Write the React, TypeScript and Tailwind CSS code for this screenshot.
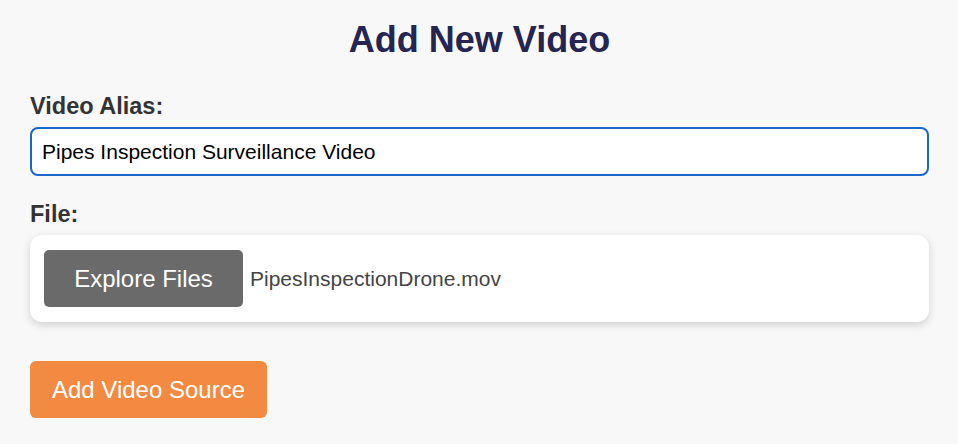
import React from "react";

export default function App() {
  return (
    <div
      className="min-h-[444px] w-full bg-[#f8f8f8] pl-[30px] pr-[29px] pt-[20px]"
      style={{ fontFamily: '"Liberation Sans", Arial, Helvetica, sans-serif' }}
    >
      <h1 className="text-center text-[36px] leading-[40px] font-bold text-[#262450]">
        Add New Video
      </h1>
      <label className="mt-[32px] block text-[23.5px] leading-[28px] font-bold text-[#333333]">
        Video Alias:
      </label>
      <div className="mt-[7px] flex h-[49px] items-center rounded-[8px] border-2 border-[#1b65cb] bg-white pl-[10px]">
        <span className="text-[21px] text-black">Pipes Inspection Surveillance Video</span>
      </div>
      <label className="mt-[24px] block text-[23.5px] leading-[28px] font-bold text-[#333333]">
        File:
      </label>
      <div className="mt-[7px] flex h-[87px] items-center gap-[7px] rounded-[12px] bg-white pl-[14px] shadow-[0_3px_8px_rgba(0,0,0,0.16)]">
        <button className="flex h-[57px] w-[199px] items-center justify-center rounded-[5px] bg-[#6a6a6a] text-[24px] text-white">
          Explore Files
        </button>
        <span className="text-[21px] text-[#444444]">PipesInspectionDrone.mov</span>
      </div>
      <button className="mt-[39px] flex h-[57px] w-[237px] items-center justify-center rounded-[6px] bg-[#f28a41] text-[24px] text-white">
        Add Video Source
      </button>
    </div>
  );
}
